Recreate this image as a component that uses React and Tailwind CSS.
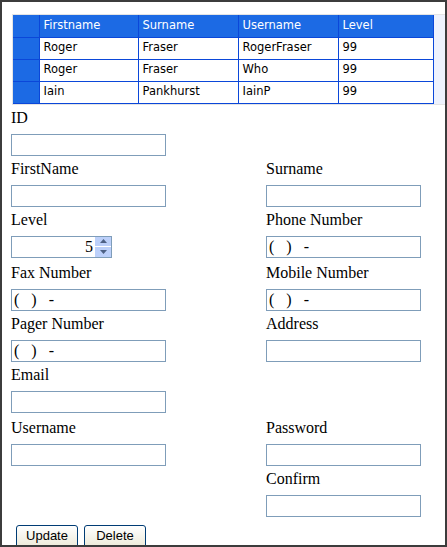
import React from "react";

const users = [
  { first: "Roger", last: "Fraser", user: "RogerFraser", level: "99" },
  { first: "Roger", last: "Fraser", user: "Who", level: "99" },
  { first: "Iain", last: "Pankhurst", user: "IainP", level: "99" },
];

function Field({ label, value }) {
  return (
    <div>
      <div className="h-[25px] leading-[18px] text-[16px] text-black">{label}</div>
      <div className="w-[155px] h-[22px] border border-[#7f9db9] bg-white text-[16px] leading-[20px] pl-[2px] whitespace-pre">
        {value}
      </div>
    </div>
  );
}

function Spinner() {
  return (
    <div>
      <div className="h-[25px] leading-[18px] text-[16px] text-black">Level</div>
      <div className="w-[101px] h-[22px] border border-[#7f9db9] bg-white flex items-stretch">
        <div className="flex-1 text-right pr-[2px] text-[16px] leading-[20px]">5</div>
        <div className="w-[16px] flex flex-col gap-[1px]">
          <div className="flex-1 bg-[#bcd0fa] flex items-center justify-center">
            <svg width="7" height="4" viewBox="0 0 7 4"><path d="M0 4 L3.5 0 L7 4 Z" fill="#4d6185" /></svg>
          </div>
          <div className="flex-1 bg-[#bcd0fa] flex items-center justify-center">
            <svg width="7" height="4" viewBox="0 0 7 4"><path d="M0 0 L3.5 4 L7 0 Z" fill="#4d6185" /></svg>
          </div>
        </div>
      </div>
    </div>
  );
}

function Button({ children }) {
  return (
    <button className="w-[62px] h-[23px] border border-[#003c74] rounded-[3px] bg-gradient-to-b from-white to-[#ece9d8] text-[13px] text-black leading-[20px] font-['Liberation_Sans',Arial,sans-serif]">
      {children}
    </button>
  );
}

export default function App() {
  const mask = "(   )   -";
  return (
    <div className="w-[447px] h-[547px] border-2 border-[#3c3c3c] bg-white overflow-hidden font-['Liberation_Serif','Times_New_Roman',serif]">
      <div className="pt-[12px] pl-[10px]">
        <div className="border-t border-l border-b border-[#e4e4e4] bg-[#eef2fd]">
          <table className="border-collapse w-[421px] text-[11.5px] font-['DejaVu_Sans',Verdana,sans-serif]">
            <thead>
              <tr className="h-[22px] bg-[#1c6ae4] text-white">
                <th className="w-[26px] border border-[#0b47d9] border-t-0 border-l-0"></th>
                <th className="w-[99px] border border-[#0b47d9] border-t-0 font-normal text-left pl-[4px]">Firstname</th>
                <th className="w-[100px] border border-[#0b47d9] border-t-0 font-normal text-left pl-[4px]">Surname</th>
                <th className="w-[100px] border border-[#0b47d9] border-t-0 font-normal text-left pl-[4px]">Username</th>
                <th className="border border-[#0b47d9] border-t-0 font-normal text-left pl-[4px]">Level</th>
              </tr>
            </thead>
            <tbody>
              {users.map((u, i) => (
                <tr key={i} className="h-[22px] text-black">
                  <td className="bg-[#1c6ae4] border border-[#0b47d9] border-l-0"></td>
                  <td className="bg-white border border-[#0b47d9] pl-[4px]">{u.first}</td>
                  <td className="bg-white border border-[#0b47d9] pl-[4px]">{u.last}</td>
                  <td className="bg-white border border-[#0b47d9] pl-[4px]">{u.user}</td>
                  <td className="bg-white border border-[#0b47d9] pl-[4px]">{u.level}</td>
                </tr>
              ))}
            </tbody>
          </table>
        </div>
      </div>

      <div className="pl-[9px] pt-[4px] grid grid-cols-[255px_1fr]">
        <div className="h-[51px]"><Field label="ID" /></div>
        <div className="h-[51px]"></div>

        <div className="h-[51px]"><Field label="FirstName" /></div>
        <div className="h-[51px]"><Field label="Surname" /></div>

        <div className="h-[53px]"><Spinner /></div>
        <div className="h-[53px]"><Field label="Phone Number" value={mask} /></div>

        <div className="h-[51px]"><Field label="Fax Number" value={mask} /></div>
        <div className="h-[51px]"><Field label="Mobile Number" value={mask} /></div>

        <div className="h-[51px]"><Field label="Pager Number" value={mask} /></div>
        <div className="h-[51px]"><Field label="Address" /></div>

        <div className="h-[53px]"><Field label="Email" /></div>
        <div className="h-[53px]"></div>

        <div className="h-[51px]"><Field label="Username" /></div>
        <div className="h-[51px]"><Field label="Password" /></div>

        <div className="h-[55px]"></div>
        <div className="h-[55px]"><Field label="Confirm" /></div>
      </div>

      <div className="pl-[14px] flex gap-[6px]">
        <Button>Update</Button>
        <Button>Delete</Button>
      </div>
    </div>
  );
}
